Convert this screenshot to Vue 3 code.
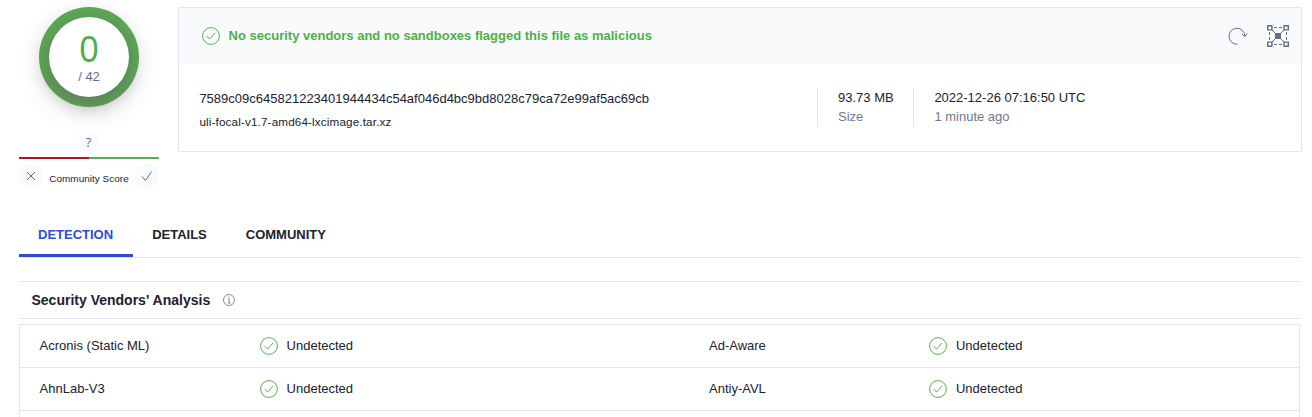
<script setup>
const tabs = ['DETECTION', 'DETAILS', 'COMMUNITY']
const vendors = ['Acronis (Static ML)', 'Ad-Aware', 'AhnLab-V3', 'Antiy-AVL', '', '']
</script>

<template>
  <main class="page">
    <section class="summary">
      <aside class="score">
        <div class="ring">
          <div class="disc">
            <span class="positives">0</span>
            <span class="total">/ 42</span>
          </div>
        </div>
        <div class="pin">
          <svg class="pin-shape" width="22" height="24" viewBox="0 0 22 24"><path d="M11 0c6 0 10.500 4.500 10.500 9.500 0 6-7 9-10.500 14.500C7.500 18.500.5 15.500.5 9.500.5 4.500 5 0 11 0z" fill="#f8fafc" /></svg>
          <span class="pin-label">?</span>
        </div>
        <div class="bar"><i class="bad"></i><i class="good"></i></div>
        <div class="community">
          <span class="vote"><svg width="24" height="24" viewBox="0 0 24 24"><path d="M8 8l8 8M16 8l-8 8" /></svg></span>
          <span class="community-label">Community Score</span>
          <span class="vote"><svg width="24" height="24" viewBox="0 0 24 24"><path d="M7 12.500l3.500 4L16.500 7.500" /></svg></span>
        </div>
      </aside>

      <article class="card">
        <header class="card-head">
          <svg class="check" width="18" height="18" viewBox="0 0 18 18"><circle cx="9" cy="9" r="8.4" /><path d="M4.800 9.100l2.800 3L13 5.900" /></svg>
          <strong class="verdict">No security vendors and no sandboxes flagged this file as malicious</strong>
          <svg class="reload" width="20" height="18" viewBox="0 0 20 18"><path d="M9.300 17.300A8 8 0 1 1 17 9.300M13.800 7l3.200 2.600 2.300-3.300" /></svg>
          <svg class="graph" width="22" height="22" viewBox="0 0 22 22">
            <path d="M7 2.500h3M12 2.500h3M7 19.500h3M12 19.500h3M2.500 7v3M2.500 12v3M19.500 7v3M19.500 12v3" />
            <path d="M5 5l12 12M17 5L5 17" />
            <path class="nodes" d="M.7.7h4.200v4.200h-4.200zM17.100.7h4.200v4.200h-4.200zM.7 17.100h4.200v4.200h-4.200zM17.100 17.100h4.200v4.200h-4.200z" />
            <path class="core" d="M8.500 8.500h5v5h-5z" />
          </svg>
        </header>
        <div class="card-body">
          <div class="names">
            <div class="hash">7589c09c645821223401944434c54af046d4bc9bd8028c79ca72e99af5ac69cb</div>
            <div class="filename">uli-focal-v1.7-amd64-lxcimage.tar.xz</div>
          </div>
          <div class="fact size"><div>93.73 MB</div><div class="muted">Size</div></div>
          <div class="fact date"><div>2022-12-26 07:16:50 UTC</div><div class="muted">1 minute ago</div></div>
        </div>
      </article>
    </section>

    <nav class="tabs">
      <a v-for="(tab, i) in tabs" :key="tab" class="tab" :class="{ active: i === 0 }">{{ tab }}</a>
    </nav>

    <section class="analysis">
      <h2 class="title">
        <span>Security Vendors' Analysis</span>
        <svg class="info" width="12" height="12" viewBox="0 0 12 12"><circle cx="6" cy="6" r="5.500" /><path d="M5 5h1.200v4M4.800 9h2.700M6 2.600v1.100" /></svg>
      </h2>
      <div class="grid">
        <div v-for="(name, i) in vendors" :key="i" class="row">
          <template v-if="name">
            <span class="vendor">{{ name }}</span>
            <svg class="check" width="18" height="18" viewBox="0 0 18 18"><circle cx="9" cy="9" r="8.4" /><path d="M4.800 9.100l2.800 3L13 5.900" /></svg>
            <span class="result">Undetected</span>
          </template>
        </div>
      </div>
    </section>
  </main>
</template>

<style>
body {
  background: #fff;
  overflow: hidden;
}
</style>

<style scoped>
.page {
  box-sizing: border-box;
  height: 417px;
  padding: 7px 10px 0 19px;
  overflow: hidden;
  font: 13px/19px "Liberation Sans", Arial, sans-serif;
  color: #20222d;
}
svg {
  display: block;
  flex: none;
  fill: none;
  stroke: #666b88;
  stroke-width: 1;
}
.summary {
  display: flex;
  gap: 19px;
  height: 205px;
}
.score {
  width: 140px;
  display: flex;
  flex-direction: column;
  align-items: center;
}
.ring {
  box-sizing: border-box;
  width: 100px;
  height: 100px;
  padding: 10px;
  border-radius: 50%;
  background: #5bad52;
}
.disc {
  height: 80px;
  border-radius: 50%;
  background: #fff;
  box-shadow: 0 6px 24px rgba(100, 100, 100, 0.85);
  display: flex;
  flex-direction: column;
  align-items: center;
}
.positives {
  margin-top: 13px;
  font-size: 36px;
  line-height: 39px;
  color: #52ad4a;
  transform: scaleX(0.95);
}
.total {
  line-height: 16px;
  color: #666b88;
}
.pin {
  position: relative;
  height: 24px;
  margin-top: 26px;
}
.pin-shape {
  stroke: none;
}
.pin-label {
  position: absolute;
  inset: 0 1px 0 0;
  font-family: "Open Sans", sans-serif;
  line-height: 18px;
  text-align: center;
  color: #666b88;
}
.bar {
  display: flex;
  width: 140px;
  height: 2px;
}
.bar i {
  flex: 1;
}
.bad {
  background: #b3122b;
}
.good {
  background: #5bad52;
}
.community {
  width: 140px;
  margin-top: 5px;
  display: flex;
  justify-content: space-between;
}
.vote {
  width: 24px;
  height: 24px;
  border-radius: 50%;
  background: #f8fafc;
}
.community-label {
  font-size: 9.9px;
  letter-spacing: 0.06px;
  line-height: 29px;
  height: 24px;
  white-space: nowrap;
}
.card {
  box-sizing: border-box;
  width: 1124px;
  height: 145px;
  border: 1px solid #e4e5ee;
}
.card-head {
  display: flex;
  align-items: center;
  height: 56px;
  padding: 0 12px 0 23px;
  background: #f8fafc;
}
.check {
  stroke: #5bad52;
}
.verdict {
  margin-left: 8.6px;
  padding-bottom: 2px;
  color: #52ad4a;
  white-space: nowrap;
}
.reload {
  margin-left: auto;
}
.graph {
  margin-left: 19px;
}
.nodes {
  fill: #f8fafc;
  stroke-width: 1.4;
}
.core {
  fill: #666b88;
}
.card-body {
  display: flex;
  padding: 24px 0 0 20.4px;
}
.names {
  width: 617.6px;
}
.hash {
  line-height: 21px;
}
.filename {
  margin-top: 3px;
  font-size: 11.7px;
  line-height: 20px;
  letter-spacing: 0.14px;
}
.fact {
  box-sizing: border-box;
  height: 39px;
  border-left: 1px solid #e4e5ee;
  padding-left: 20px;
  white-space: nowrap;
}
.size {
  width: 96px;
}
.date {
  padding-left: 20.4px;
}
.muted {
  color: #72778f;
}
.tabs {
  box-sizing: border-box;
  width: 1281px;
  height: 46px;
  border-bottom: 1px solid #e4e5ee;
  display: flex;
}
.tab {
  box-sizing: border-box;
  height: 45px;
  padding: 13px 20px 0 19px;
  font-weight: bold;
}
.active {
  color: #2f4bd6;
  border-bottom: 3px solid #2f4bd6;
}
.analysis {
  width: 1281px;
  margin-top: 23px;
}
.title {
  box-sizing: border-box;
  height: 38px;
  margin: 0;
  padding-left: 12.5px;
  border: solid #e4e5ee;
  border-width: 1px 0;
  display: flex;
  align-items: center;
  gap: 12.5px;
  font-size: 14px;
}
.info {
  stroke-width: 0.8;
}
.grid {
  box-sizing: border-box;
  margin-top: 5px;
  border: 1px solid #e4e5ee;
  display: grid;
  grid-template-columns: 669.4px 1fr;
}
.row {
  box-sizing: border-box;
  height: 43px;
  padding-left: 19.6px;
  border-bottom: 1px solid #e4e5ee;
  display: flex;
  align-items: center;
}
.vendor {
  width: 220.4px;
  padding-bottom: 2px;
}
.result {
  margin-left: 8.6px;
  padding-bottom: 2px;
}
</style>
